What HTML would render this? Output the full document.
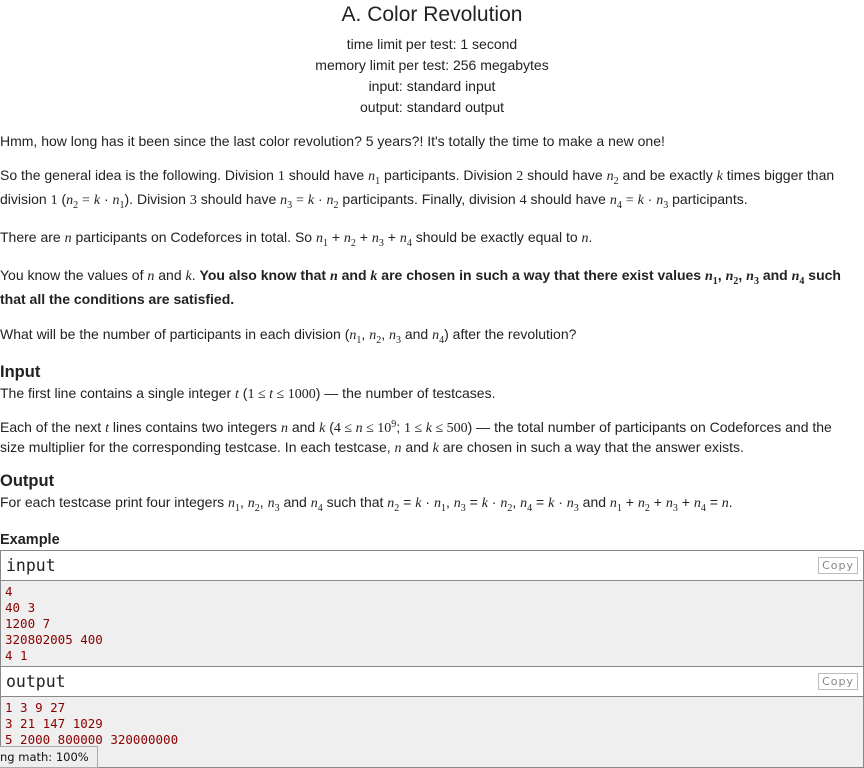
<!DOCTYPE html>
<html><head><meta charset="utf-8"><style>
body{margin:0;width:864px;height:768px;overflow:hidden;background:#fff;font-family:"Liberation Sans",sans-serif;color:#222;font-size:14px;position:relative}
.l{position:absolute;left:0;white-space:nowrap;line-height:18px}
.c{left:0;width:864px;text-align:center}
i.m,.m{font-family:"Liberation Serif",serif;font-style:italic;font-size:14px}
.r{font-family:"Liberation Serif",serif;font-style:normal;font-size:14px}
sub{font-size:10px;vertical-align:-4px;line-height:0;font-style:normal;font-family:"Liberation Serif",serif}
sup{font-size:10px;vertical-align:5px;line-height:0;font-family:"Liberation Serif",serif}
h3{position:absolute;left:0;margin:0;font-size:16.5px;font-weight:bold;line-height:20px}
.box{position:absolute;left:0;width:862px;border:1px solid #888;}
.hd{position:absolute;left:0;width:862px;height:29px;background:#fff;border-bottom:1px solid #888;font-family:"DejaVu Sans Mono",monospace;font-size:16.5px;line-height:29px;text-indent:5px;color:#222}
.cp{position:absolute;right:5px;top:6px;border:1px solid #bbb;font-family:"DejaVu Sans",sans-serif;font-size:11px;color:#888;padding:0 3px;line-height:15px;text-indent:0;letter-spacing:1px}
.bd{position:absolute;left:0;width:862px;background:#efefef;font-family:"DejaVu Sans Mono",monospace;font-size:12.5px;line-height:16px;color:#8b0000;padding-left:4px;white-space:pre}
</style></head><body>
<div class="l c" style="top:3px;font-size:21px;line-height:24px">A. Color Revolution</div>
<div class="l c" style="top:35px">time limit per test: 1 second</div>
<div class="l c" style="top:56px">memory limit per test: 256 megabytes</div>
<div class="l c" style="top:77px">input: standard input</div>
<div class="l c" style="top:98px">output: standard output</div>
<div class="l" style="top:132px">Hmm, how long has it been since the last color revolution? 5 years?! It's totally the time to make a new one!</div>
<div class="l" style="top:166px">So the general idea is the following. Division <span class="r">1</span> should have <i class="m">n</i><sub>1</sub> participants. Division <span class="r">2</span> should have <i class="m">n</i><sub>2</sub> and be exactly <i class="m">k</i> times bigger than</div>
<div class="l" style="top:190px">division <span class="r">1</span> (<i class="m">n</i><sub>2</sub> <span class="r">=</span> <i class="m">k</i> · <i class="m">n</i><sub>1</sub>). Division <span class="r">3</span> should have <i class="m">n</i><sub>3</sub> <span class="r">=</span> <i class="m">k</i> · <i class="m">n</i><sub>2</sub> participants. Finally, division <span class="r">4</span> should have <i class="m">n</i><sub>4</sub> <span class="r">=</span> <i class="m">k</i> · <i class="m">n</i><sub>3</sub> participants.</div>
<div class="l" style="top:228px">There are <i class="m">n</i> participants on Codeforces in total. So <i class="m">n</i><sub>1</sub> + <i class="m">n</i><sub>2</sub> + <i class="m">n</i><sub>3</sub> + <i class="m">n</i><sub>4</sub> should be exactly equal to <i class="m">n</i>.</div>
<div class="l" style="top:266px">You know the values of <i class="m">n</i> and <i class="m">k</i>. <b>You also know that <i class="m">n</i> and <i class="m">k</i> are chosen in such a way that there exist values <i class="m">n</i><sub>1</sub>, <i class="m">n</i><sub>2</sub>, <i class="m">n</i><sub>3</sub> and <i class="m">n</i><sub>4</sub> such</b></div>
<div class="l" style="top:290px"><b>that all the conditions are satisfied.</b></div>
<div class="l" style="top:325px">What will be the number of participants in each division (<i class="m">n</i><sub>1</sub>, <i class="m">n</i><sub>2</sub>, <i class="m">n</i><sub>3</sub> and <i class="m">n</i><sub>4</sub>) after the revolution?</div>
<h3 style="top:362px">Input</h3>
<div class="l" style="top:384px">The first line contains a single integer <i class="m">t</i> (<span class="r">1 ≤ </span><i class="m">t</i><span class="r"> ≤ 1000</span>) — the number of testcases.</div>
<div class="l" style="top:418px">Each of the next <i class="m">t</i> lines contains two integers <i class="m">n</i> and <i class="m">k</i> (<span class="r">4 ≤ </span><i class="m">n</i><span class="r"> ≤ 10</span><sup>9</sup>; <span class="r">1 ≤ </span><i class="m">k</i><span class="r"> ≤ 500</span>) — the total number of participants on Codeforces and the</div>
<div class="l" style="top:438px">size multiplier for the corresponding testcase. In each testcase, <i class="m">n</i> and <i class="m">k</i> are chosen in such a way that the answer exists.</div>
<h3 style="top:471px">Output</h3>
<div class="l" style="top:493px">For each testcase print four integers <i class="m">n</i><sub>1</sub>, <i class="m">n</i><sub>2</sub>, <i class="m">n</i><sub>3</sub> and <i class="m">n</i><sub>4</sub> such that <i class="m">n</i><sub>2</sub> = <i class="m">k</i> · <i class="m">n</i><sub>1</sub>, <i class="m">n</i><sub>3</sub> = <i class="m">k</i> · <i class="m">n</i><sub>2</sub>, <i class="m">n</i><sub>4</sub> = <i class="m">k</i> · <i class="m">n</i><sub>3</sub> and <i class="m">n</i><sub>1</sub> + <i class="m">n</i><sub>2</sub> + <i class="m">n</i><sub>3</sub> + <i class="m">n</i><sub>4</sub> = <i class="m">n</i>.</div>
<div class="l" style="top:531px;font-weight:bold;font-size:14.5px">Example</div>
<div class="box" style="top:550px;height:216px">
<div class="hd" style="top:0">input<span class="cp">Copy</span></div>
<div class="bd" style="top:30px;height:85px;padding-top:3px;box-sizing:border-box">4
40 3
1200 7
320802005 400
4 1</div>
<div class="hd" style="top:115px;border-top:1px solid #888">output<span class="cp">Copy</span></div>
<div class="bd" style="top:146px;height:70px;padding-top:3px;box-sizing:border-box">1 3 9 27
3 21 147 1029
5 2000 800000 320000000</div>
</div>
<div style="position:absolute;left:0;top:746px;width:97px;height:20px;background:#eee;border:1px solid #aaa;border-left:none;font-family:'DejaVu Sans',sans-serif;font-size:11.5px;line-height:20px;color:#111;padding-left:0">ng math: 100%</div>
</body></html>
